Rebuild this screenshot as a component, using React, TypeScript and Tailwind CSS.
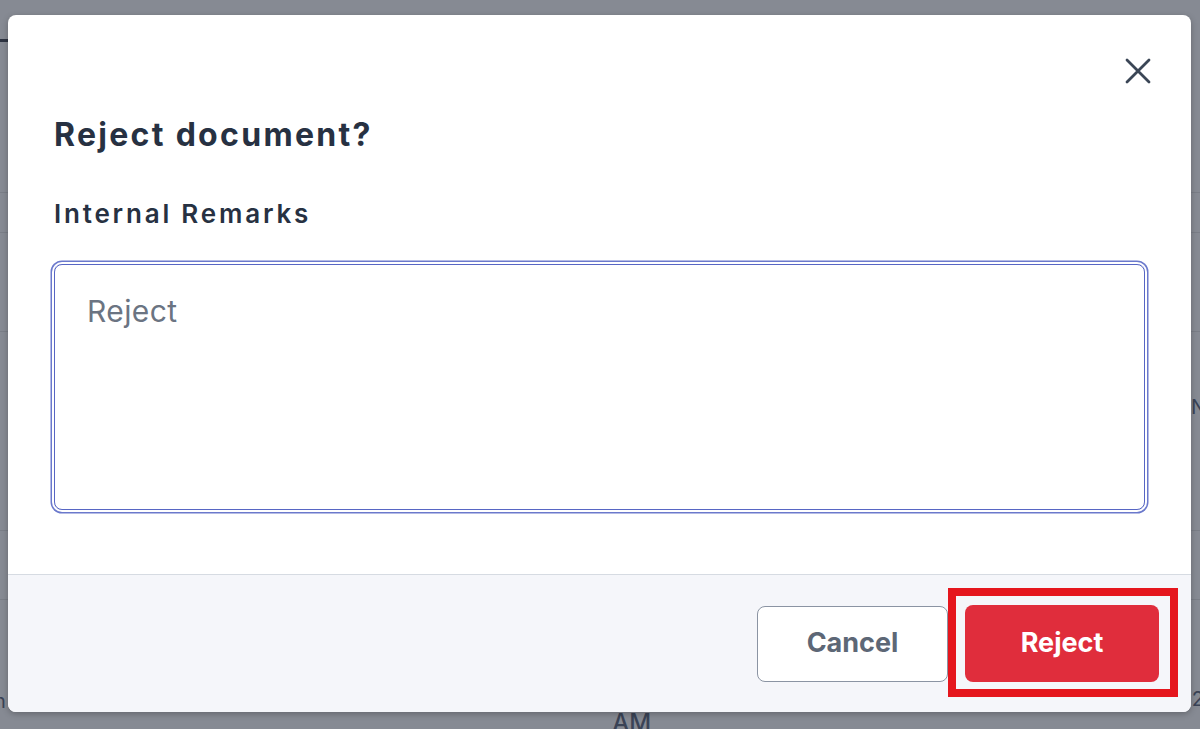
import React from "react";

function CloseIcon() {
  return (
    <svg width="26" height="26" viewBox="0 0 26 26" fill="none">
      <path d="M2 2L24 24M24 2L2 24" stroke="#3b4656" strokeWidth="2.8" strokeLinecap="round" />
    </svg>
  );
}

export default function App() {
  return (
    <div className="relative w-[1200px] h-[729px] overflow-hidden bg-[#868a93] font-['Inter',sans-serif]">
      {/* Dimmed page behind the dialog */}
      <div className="flex flex-col w-full h-full">
        <div className="h-[39px]" />
        <div className="h-[3px] w-[40px] bg-[#2e3442]" />
        <div className="h-[151px] border-b border-[#7a7e87]" />
        <div className="h-[40px] border-b border-[#7a7e87]" />
        <div className="h-[99px] border-b border-[#7a7e87]" />
        <div className="h-[199px] border-b border-[#7a7e87] flex items-start justify-end">
          <span className="mt-[60px] mr-[-6px] text-[20px] text-[#3a4356]">N</span>
        </div>
        <div className="h-[69px] border-b border-[#7a7e87]" />
        <div className="flex-1 flex items-end justify-between">
          <span className="text-[20px] leading-none text-[#3a4356] -ml-[6px] mb-[18px]">n</span>
          <span className="text-[24px] leading-none text-[#3a4356] font-medium mb-[-6px] ml-[66px]">AM</span>
          <span className="text-[20px] leading-none text-[#3a4356] -mr-[4px] mb-[20px]">2</span>
        </div>
      </div>

      {/* Dialog */}
      <div className="absolute left-[8px] top-[15px] w-[1183px] h-[697px] rounded-[8px] bg-white flex flex-col overflow-hidden shadow-[0_2px_6px_rgba(0,0,0,0.25)]">
        <button className="absolute top-[43px] right-[40px]">
          <CloseIcon />
        </button>

        <div className="flex-1 flex flex-col px-[46px] pt-[101px]">
          <h2 className="text-[32px] leading-[38px] font-bold text-[#273142] tracking-[2.3px]">
            Reject document?
          </h2>
          <label className="mt-[45px] text-[26px] leading-[30px] font-semibold text-[#273142] tracking-[2.8px]">
            Internal Remarks
          </label>
          <textarea
            placeholder="Reject"
            className="mt-[35px] w-full h-[246px] resize-none rounded-[8px] border-[1.5px] border-[#5766c4] ring-[1.5px] ring-[#6b79cc] ring-offset-[2px] ring-offset-white outline-none px-[32px] pt-[25px] text-[30px] leading-[42px] tracking-[0.4px] text-[#1f2937] placeholder:text-[#6b7482] font-['Inter',sans-serif]"
          />
        </div>

        <div className="h-[138px] border-t border-[#d6dbe2] bg-[#f5f6fa] flex items-center justify-end gap-[17px] pr-[32px]">
          <button className="w-[191px] h-[76px] rounded-[8px] border border-[#8b94a3] bg-white text-[27px] font-bold text-[#5d6776]">
            Cancel
          </button>
          <div className="relative">
            <button className="w-[194px] h-[77px] rounded-[8px] bg-[#e02d3c] text-[27px] font-bold text-white">
              Reject
            </button>
            <div className="absolute left-[-17px] top-[-17px] right-[-19px] bottom-[-15px] border-[8px] border-[#e5161d] pointer-events-none" />
          </div>
        </div>
      </div>
    </div>
  );
}
